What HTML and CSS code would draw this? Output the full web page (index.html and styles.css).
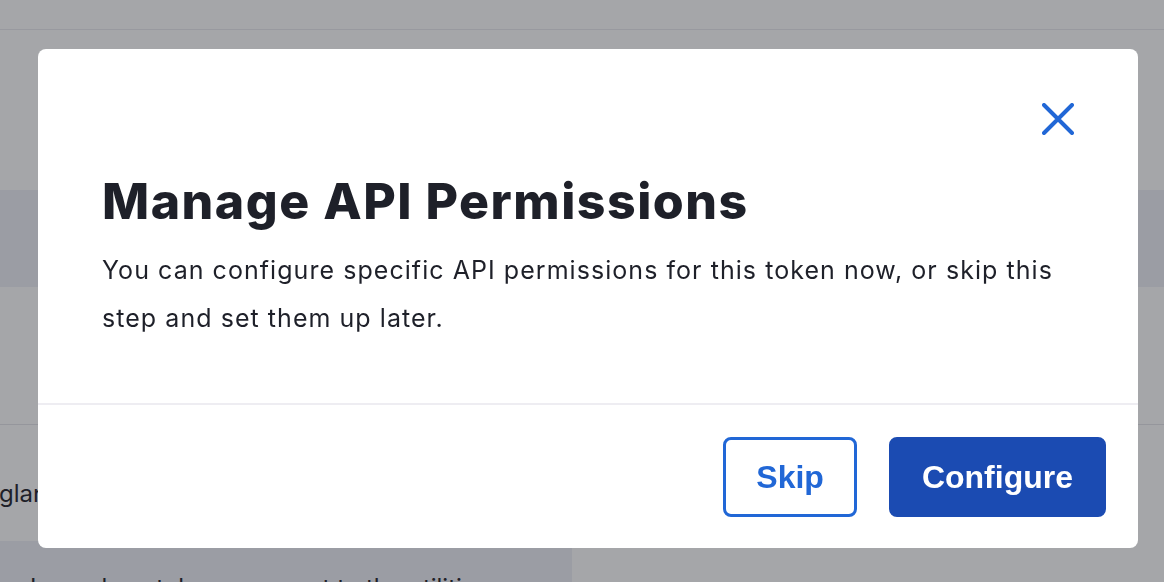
FILE: index.html
```html
<!DOCTYPE html>
<html lang="en">
<head>
  <meta charset="UTF-8" />
  <title>Manage API Permissions</title>
  <link rel="stylesheet" href="styles.css">
</head>
<body>

  <!-- page behind the dialog -->
  <div class="page">
    <div class="topbar"></div>
    <div class="hero"></div>
    <div class="band"></div>
    <div class="section"></div>
    <div class="row"><span class="row-text">glance at your tokens</span></div>
    <div class="bottom">
      <div class="bottom-left"><span class="bottom-text">Learn how tokens connect to the utilities</span></div>
      <div class="bottom-right"></div>
    </div>
  </div>

  <!-- dialog -->
  <div class="overlay">
    <div class="modal">
      <div class="modal-head">
        <div class="close-row">
          <button class="close" aria-label="Close">
            <svg width="32" height="32" viewBox="0 0 32 32" fill="none">
              <path d="M2 2L30 30M30 2L2 30" stroke="#2167d6" stroke-width="4" stroke-linecap="round"/>
            </svg>
          </button>
        </div>
        <h2 class="title">Manage API Permissions</h2>
        <p class="desc">You can configure specific API permissions for this token now, or skip this step and set them up later.</p>
      </div>
      <div class="modal-foot">
        <button class="btn btn-outline">Skip</button>
        <button class="btn btn-primary">Configure</button>
      </div>
    </div>
  </div>

</body>
</html>
```

FILE: styles.css
```css
body {
  margin: 0;
  font-family: Inter, "Noto Sans", sans-serif;
  color: #1e2029;
  background: #fff;
  overflow: hidden;
}

.page {
  height: 582px;
  overflow: hidden;
}

.topbar {
  height: 29px;
  border-bottom: 1px solid #e9e9ee;
}

.hero { height: 160px; }

.band {
  height: 97px;
  background: #eef0f7;
}

.section {
  height: 137px;
  border-bottom: 1px solid #e4e4ea;
}

.row {
  height: 116px;
  display: flex;
  align-items: center;
}

.row-text {
  font-size: 24px;
  margin-left: -1px;
  margin-top: 20px;
}

.bottom {
  display: flex;
  height: 41px;
}

.bottom-left {
  width: 572px;
  background: #eef0f7;
  padding: 32px 0 0 30px;
  box-sizing: border-box;
}

.bottom-text { font-size: 24px; }

.bottom-right { flex: 1; }

.overlay {
  position: fixed;
  inset: 0;
  background: rgba(30, 32, 41, 0.4);
  padding: 49px 26px 0 38px;
}

.modal {
  width: 1100px;
  height: 499px;
  background: #fff;
  border-radius: 8px;
  display: flex;
  flex-direction: column;
}

.modal-head {
  padding: 54px 64px 61px 64px;
  border-bottom: 2px solid #eeedf2;
}

.close-row {
  display: flex;
  justify-content: flex-end;
  height: 32px;
}

.close {
  border: none;
  background: none;
  padding: 0;
  width: 32px;
  height: 32px;
  cursor: pointer;
}

.close svg { display: block; }

.title {
  margin: 36px 0 0;
  font-size: 50px;
  line-height: 60px;
  font-weight: 800;
  letter-spacing: 1.5px;
}

.desc {
  margin: 15px 0 0;
  font-size: 25px;
  line-height: 48px;
  letter-spacing: 1.05px;
}

.modal-foot {
  display: flex;
  justify-content: flex-end;
  gap: 32px;
  padding: 32px 32px 31px;
}

.btn {
  height: 80px;
  padding: 0 30px;
  border: 3px solid #2167d6;
  border-radius: 8px;
  font-family: "Liberation Sans", Arial, sans-serif;
  font-size: 32px;
  font-weight: 700;
  cursor: pointer;
}

.btn-outline {
  background: #fff;
  color: #2167d6;
}

.btn-primary {
  background: #1b4bb2;
  border-color: #1b4bb2;
  color: #fff;
}
```
